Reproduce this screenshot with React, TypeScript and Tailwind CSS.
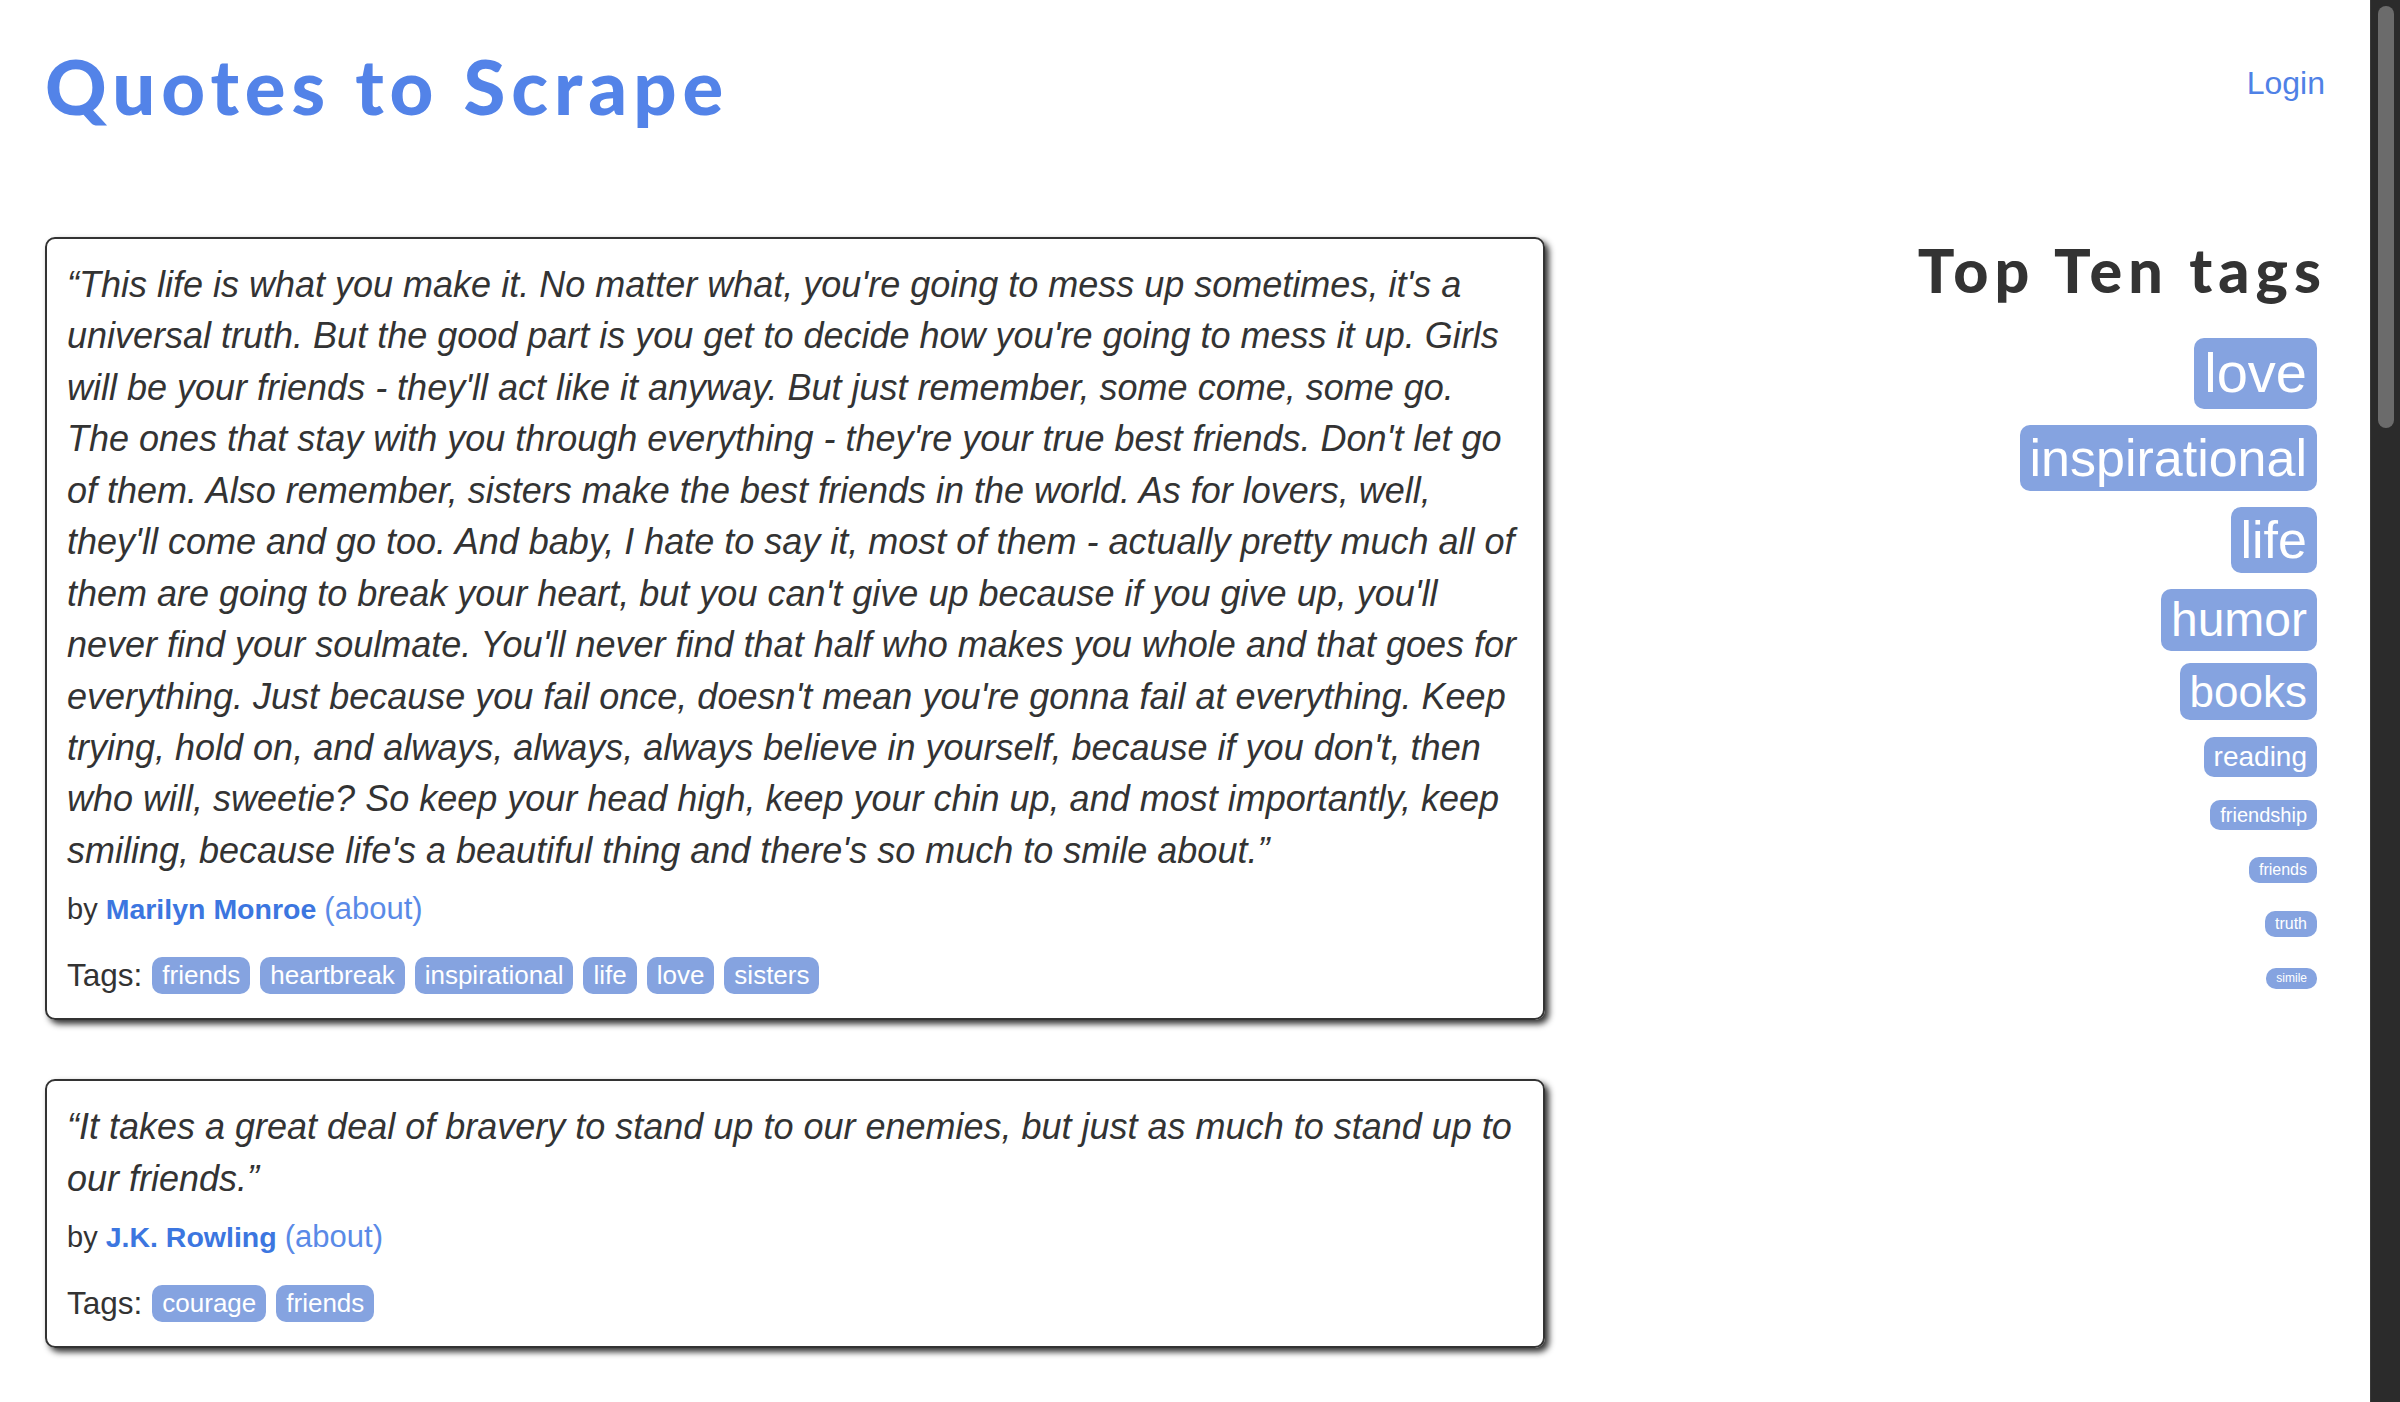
import React from "react";

const quote1 = [
  "“This life is what you make it. No matter what, you're going to mess up sometimes, it's a",
  "universal truth. But the good part is you get to decide how you're going to mess it up. Girls",
  "will be your friends - they'll act like it anyway. But just remember, some come, some go.",
  "The ones that stay with you through everything - they're your true best friends. Don't let go",
  "of them. Also remember, sisters make the best friends in the world. As for lovers, well,",
  "they'll come and go too. And baby, I hate to say it, most of them - actually pretty much all of",
  "them are going to break your heart, but you can't give up because if you give up, you'll",
  "never find your soulmate. You'll never find that half who makes you whole and that goes for",
  "everything. Just because you fail once, doesn't mean you're gonna fail at everything. Keep",
  "trying, hold on, and always, always, always believe in yourself, because if you don't, then",
  "who will, sweetie? So keep your head high, keep your chin up, and most importantly, keep",
  "smiling, because life's a beautiful thing and there's so much to smile about.”",
];

const quote2 = [
  "“It takes a great deal of bravery to stand up to our enemies, but just as much to stand up to",
  "our friends.”",
];

function Tag({ children }: { children: React.ReactNode }) {
  return (
    <span className="inline-block rounded-[10px] bg-[#85a3e0] px-[10px] py-[4px] text-[26px] leading-[1.12] text-white">
      {children}
    </span>
  );
}

function Quote({
  lines,
  author,
  tags,
}: {
  lines: string[];
  author: string;
  tags: string[];
}) {
  return (
    <div className="mb-[59px] rounded-[10px] border-2 border-[#333] px-[20px] pb-[23px] pt-[20px] shadow-[4px_4px_6px_#333]">
      <div className="mb-[13px] text-[36px] italic leading-[51.43px]">
        {lines.map((l, i) => (
          <span key={i} className="block whitespace-nowrap">
            {l}
          </span>
        ))}
      </div>
      <div className="mt-[3px] text-[29px] leading-[40px]">
        by <span className="text-[28.5px] font-bold text-[#3c76e0]">{author}</span>{" "}
        <span className="text-[31px] text-[#5a8ae7]">(about)</span>
      </div>
      <div className="mt-[26px] flex h-[40px] items-center gap-[10px] leading-[40px]">
        <span className="text-[31.5px]">Tags:</span>
        {tags.map((t) => (
          <Tag key={t}>{t}</Tag>
        ))}
      </div>
    </div>
  );
}

const topTags: { name: string; size: string; mt: string }[] = [
  { name: "love", size: "text-[56px]", mt: "mt-[35px]" },
  { name: "inspirational", size: "text-[52px]", mt: "mt-[16px]" },
  { name: "life", size: "text-[52px]", mt: "mt-[16px]" },
  { name: "humor", size: "text-[48px]", mt: "mt-[16px]" },
  { name: "books", size: "text-[44px]", mt: "mt-[12px]" },
  { name: "reading", size: "text-[28px]", mt: "mt-[17px]" },
  { name: "friendship", size: "text-[20px]", mt: "mt-[23px]" },
  { name: "friends", size: "text-[16px]", mt: "mt-[27px]" },
  { name: "truth", size: "text-[16px]", mt: "mt-[28px]" },
  { name: "simile", size: "text-[12px]", mt: "mt-[31px]" },
];

export default function App() {
  return (
    <div className="flex h-[1402px] w-[2400px] overflow-hidden bg-white font-['Liberation_Sans',Arial,sans-serif] text-[#333]">
      <div className="flex-1">
        <div className="mx-auto w-[2340px] px-[30px]">
          <header className="flex h-[237px] items-start justify-between">
            <h1 className="mt-[46px] font-['Lato',sans-serif] text-[76px] font-black leading-[79px] tracking-[6px] text-[#5383e8]">
              Quotes to Scrape
            </h1>
            <a className="mt-[63px] text-[32px] leading-[40px] text-[#4f81e6]" href="#">
              Login
            </a>
          </header>
          <div className="flex gap-[60px]">
            <main className="w-[1500px]">
              <Quote
                lines={quote1}
                author="Marilyn Monroe"
                tags={["friends", "heartbreak", "inspirational", "life", "love", "sisters"]}
              />
              <Quote lines={quote2} author="J.K. Rowling" tags={["courage", "friends"]} />
            </main>
            <aside className="flex w-[720px] flex-col items-end">
              <h2 className="mr-[-2px] font-['Lato',sans-serif] text-[61px] font-black leading-[66px] tracking-[6px] text-[#333]">
                Top Ten tags
              </h2>
              {topTags.map((t) => (
                <span
                  key={t.name}
                  className={`${t.size} ${t.mt} mr-[8px] inline-block rounded-[10px] bg-[#85a3e0] px-[10px] py-[4px] leading-[1.12] text-white`}
                >
                  {t.name}
                </span>
              ))}
            </aside>
          </div>
        </div>
      </div>
      <div className="flex h-full w-[30px] border-l border-[#3a3a3a] bg-[#2b2b2b] pl-[7px] pt-[6px]">
        <div className="h-[422px] w-[16px] rounded-full bg-[#6b6b6b]" />
      </div>
    </div>
  );
}
